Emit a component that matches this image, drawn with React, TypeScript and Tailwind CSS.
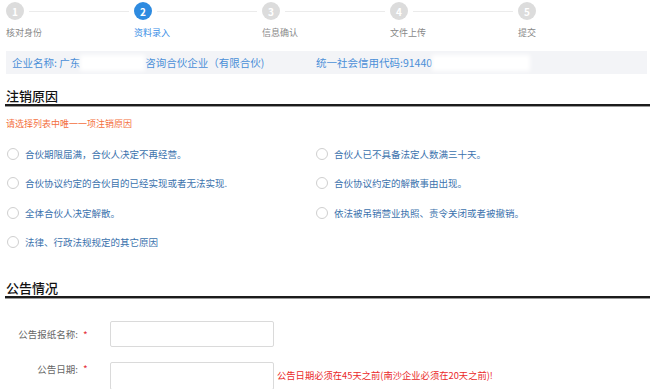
const steps = ['核对身份', '资料录入', '信息确认', '文件上传', '提交']

const reasons = [
  '合伙期限届满，合伙人决定不再经营。',
  '合伙人已不具备法定人数满三十天。',
  '合伙协议约定的合伙目的已经实现或者无法实现.',
  '合伙协议约定的解散事由出现。',
  '全体合伙人决定解散。',
  '依法被吊销营业执照、责令关闭或者被撤销。',
  '法律、行政法规规定的其它原因',
]

function SectionTitle({ title }: { title: string }) {
  return (
    <div className="ml-[5px]">
      <h2 className="text-[13px] leading-[16px] font-medium text-[#111] pl-[1px]">{title}</h2>
      <div className="h-[2px] bg-[#1c1c1c]" />
      <div className="h-px bg-[#9a9a9a]" />
    </div>
  )
}

export default function App() {
  return (
    <main className="w-[650px] h-[389px] overflow-hidden bg-white font-['Noto_Sans_CJK_SC','Noto_Sans',sans-serif]">
      {/* Steps */}
      <div className="flex pl-[6px] pt-[2px]">
        {steps.map((label, i) => {
          const active = i === 1
          return (
            <div key={label} className="w-[128px] shrink-0">
              <div className="flex items-center h-[18px]">
                <div
                  className={`w-[18px] h-[18px] rounded-full flex items-center justify-center text-[10px] font-bold text-white ${active ? 'bg-[#2e8be0]' : 'bg-[#dcdcdc]'}`}
                >
                  {i + 1}
                </div>
                {i < steps.length - 1 && <div className="flex-1 h-px bg-[#ebebeb] mx-[5px]" />}
              </div>
              <div className={`mt-[7px] text-[9px] leading-[12px] ${active ? 'text-[#3a8ee6]' : 'text-[#888]'}`}>{label}</div>
            </div>
          )
        })}
      </div>

      {/* Company info */}
      <div className="mt-[12px] ml-[6px] mr-[3px] h-[23px] bg-[#f3f4f7] flex items-center px-[6px] text-[10.5px] text-[#4a8fd8] whitespace-nowrap">
        <div className="w-[304px] flex items-center">
          <span>企业名称: 广东</span>
          <span className="inline-block w-[65px] h-[16px] bg-white blur-[2px]" />
          <span>咨询合伙企业（有限合伙)</span>
        </div>
        <div className="flex items-center">
          <span>统一社会信用代码:91440</span>
          <span className="inline-block w-[98px] h-[16px] bg-white blur-[2px]" />
        </div>
      </div>

      {/* Cancellation reason */}
      <div className="mt-[14px]">
        <SectionTitle title="注销原因" />
      </div>
      <p className="mt-[11px] ml-[6px] text-[9px] leading-[12px] text-[#f4703e]">请选择列表中唯一一项注销原因</p>

      <div className="mt-[9px] pl-[7px] grid grid-cols-[309px_1fr]">
        {reasons.map((r) => (
          <label key={r} className="h-[29.5px] flex items-center">
            <span className="w-[12px] h-[12px] rounded-full border border-[#cfcfcf] bg-white shrink-0" />
            <span className="ml-[6px] text-[9.5px] text-[#3b72ad] whitespace-nowrap">{r}</span>
          </label>
        ))}
      </div>

      {/* Announcement */}
      <div className="mt-[23px]">
        <SectionTitle title="公告情况" />
      </div>

      <div className="mt-[22px] flex items-center">
        <span className="w-[78px] text-right text-[9.5px] text-[#666]">公告报纸名称:</span>
        <span className="w-[32px] pl-[5px] text-[10px] text-[#e5323c]">*</span>
        <div className="w-[164px] h-[26px] border border-[#dadada] rounded-[2px]" />
      </div>

      <div className="mt-[15px] flex items-start">
        <span className="w-[78px] mt-[1px] text-right text-[9.5px] leading-[12px] text-[#666]">公告日期:</span>
        <span className="w-[32px] mt-[1px] pl-[5px] text-[10px] leading-[12px] text-[#e5323c]">*</span>
        <div className="w-[164px] h-[28px] border border-[#dadada] rounded-[2px] shrink-0" />
        <span className="ml-[3px] mt-[7px] text-[9.3px] leading-[12px] text-[#ea2a2a] whitespace-nowrap">
          公告日期必须在45天之前(南沙企业必须在20天之前)!
        </span>
      </div>
    </main>
  )
}
